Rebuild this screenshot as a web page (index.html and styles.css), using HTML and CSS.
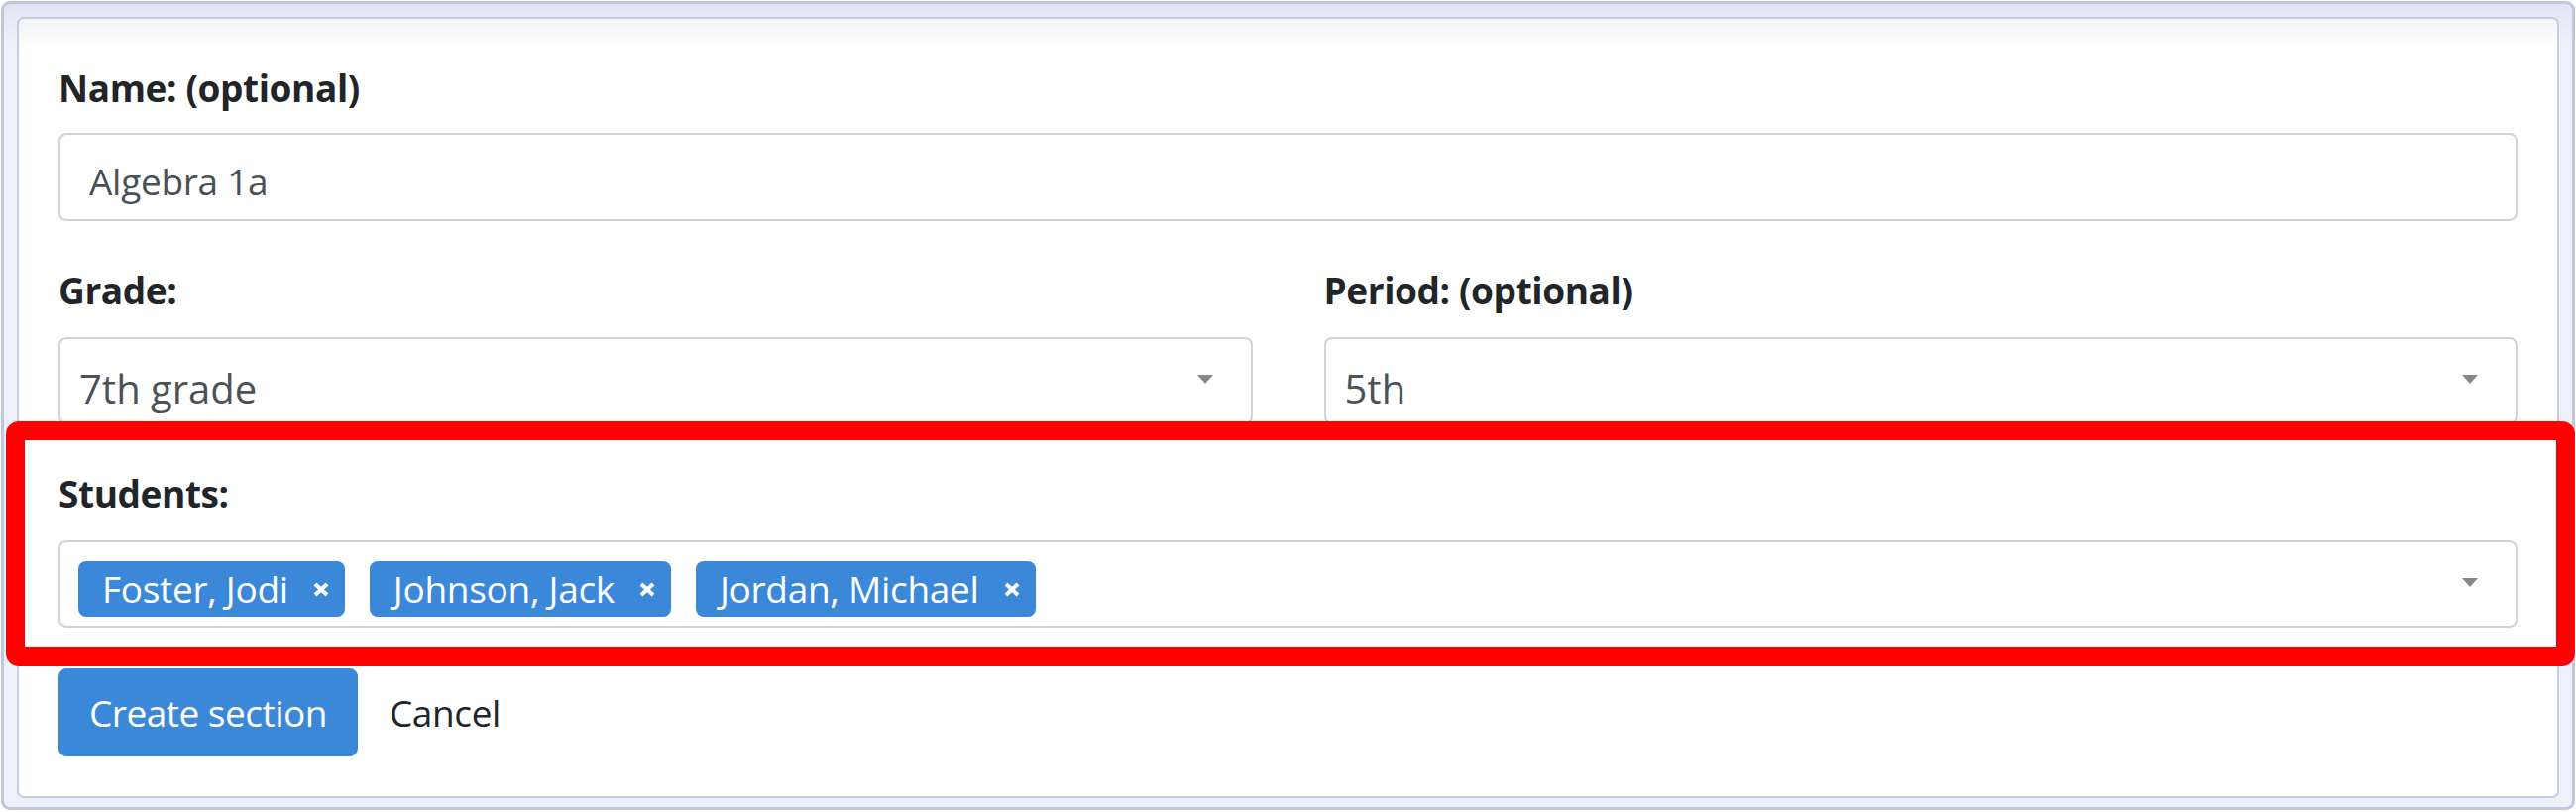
FILE: index.html
```html
<!DOCTYPE html>
<html lang="en">
<head>
<meta charset="utf-8">
<title>Create section</title>
<link rel="stylesheet" href="styles.css">
</head>
<body>
<div class="frame">
  <div class="panel">
    <form class="form">
      <div class="group group-name">
        <label class="label label-input" for="name">Name: (optional)</label>
        <input class="input" id="name" type="text" value="Algebra 1a" readonly>
      </div>
      <div class="row">
        <div class="col">
          <label class="label">Grade:</label>
          <div class="select">
            <span class="select-text">7th grade</span>
            <span class="arrow"></span>
          </div>
        </div>
        <div class="col">
          <label class="label">Period: (optional)</label>
          <div class="select">
            <span class="select-text">5th</span>
            <span class="arrow"></span>
          </div>
        </div>
      </div>
      <div class="group group-students">
        <label class="label">Students:</label>
        <div class="select multi">
          <ul class="chips">
            <li class="chip"><span class="chip-text">Foster, Jodi</span><svg class="chip-x" viewBox="0 0 16 15" width="16" height="15"><path d="M2 2 L14 13 M14 2 L2 13" stroke="#fff" stroke-width="4" stroke-linecap="butt" fill="none"/></svg></li>
            <li class="chip"><span class="chip-text">Johnson, Jack</span><svg class="chip-x" viewBox="0 0 16 15" width="16" height="15"><path d="M2 2 L14 13 M14 2 L2 13" stroke="#fff" stroke-width="4" stroke-linecap="butt" fill="none"/></svg></li>
            <li class="chip"><span class="chip-text">Jordan, Michael</span><svg class="chip-x" viewBox="0 0 16 15" width="16" height="15"><path d="M2 2 L14 13 M14 2 L2 13" stroke="#fff" stroke-width="4" stroke-linecap="butt" fill="none"/></svg></li>
          </ul>
          <span class="arrow"></span>
        </div>
      </div>
      <div class="actions">
        <button class="btn" type="button">Create section</button>
        <a class="cancel" href="#">Cancel</a>
      </div>
    </form>
  </div>
</div>
<div class="highlight"></div>
</body>
</html>
```
FILE: styles.css
```css
html, body {
  margin: 0;
  padding: 0;
  background: #ffffff;
  overflow: hidden;
}

body {
  font-family: "Open Sans", "Noto Sans", "Liberation Sans", sans-serif;
  color: #212529;
}

.frame {
  margin: 1px 1px 0 1px;
  width: 2597px;
  box-sizing: border-box;
  border: 3px solid #bfc7de;
  border-radius: 9px;
  background: linear-gradient(#dfe5f3, #edf1fa 40px);
  padding: 13px 13px 9px 13px;
}

.panel {
  border: 2px solid #c7cee2;
  border-radius: 7px;
  background: linear-gradient(#f3f4f7, #ffffff 32px);
  padding: 42px 40px 40px 40px;
}

.form {
  display: flex;
  flex-direction: column;
  margin: 0;
}

.group {
  display: flex;
  flex-direction: column;
}

.group-name {
  margin-bottom: 42px;
}

.group-students {
  margin-bottom: 41px;
}

.label {
  display: block;
  font-size: 37px;
  line-height: 56px;
  font-weight: 700;
  letter-spacing: -0.4px;
  color: #212529;
  margin-bottom: 19px;
}

.label-input {
  margin-bottom: 17px;
}

.input {
  display: block;
  box-sizing: border-box;
  width: 100%;
  height: 89px;
  margin: 0;
  border: 2px solid #ced4da;
  border-radius: 8px;
  padding: 8px 29px 0 29px;
  font-family: inherit;
  font-size: 37px;
  letter-spacing: -0.3px;
  line-height: 77px;
  color: #495057;
  background: #ffffff;
  outline: none;
}

.row {
  display: grid;
  grid-template-columns: 1fr 1fr;
  column-gap: 72px;
  margin-bottom: 42px;
}

.col {
  display: flex;
  flex-direction: column;
}

.select {
  box-sizing: border-box;
  height: 88px;
  border: 2px solid #ced4da;
  border-radius: 8px;
  background: #ffffff;
  display: flex;
  align-items: flex-start;
  padding: 23px 38px 0 19px;
}

.select-text {
  font-size: 40px;
  line-height: 54px;
  color: #4d5257;
  white-space: nowrap;
}

.arrow {
  margin-left: auto;
  margin-top: 13px;
  width: 0;
  height: 0;
  border-top: 9px solid #888888;
  border-left: 8.5px solid transparent;
  border-right: 8.5px solid transparent;
  flex: none;
}

.select.multi {
  padding: 19px 38px 0 18px;
}

.select.multi .arrow {
  margin-top: 17px;
}

.chips {
  list-style: none;
  margin: 0;
  padding: 0;
  display: flex;
  gap: 25px;
}

.chip {
  display: flex;
  align-items: center;
  height: 56px;
  box-sizing: border-box;
  padding: 0 16px 0 24px;
  border-radius: 8px;
  background: #3b88d9;
  color: #ffffff;
  font-size: 37px;
  letter-spacing: -0.3px;
  line-height: 56px;
  white-space: nowrap;
}

.chip-x {
  display: block;
  margin-left: 25px;
  flex: none;
}

.actions {
  display: flex;
  align-items: center;
}

.btn {
  box-sizing: border-box;
  height: 89px;
  margin: 0;
  padding: 0 30px;
  border: 1px solid #3b88d9;
  border-radius: 8px;
  background: #3b88d9;
  color: #ffffff;
  font-family: inherit;
  font-size: 37px;
  letter-spacing: -0.5px;
  line-height: 87px;
  cursor: pointer;
}

.cancel {
  padding-left: 32px;
  font-size: 37px;
  letter-spacing: -0.4px;
  line-height: 56px;
  color: #212529;
  text-decoration: none;
}

.highlight {
  position: absolute;
  left: 6px;
  top: 425px;
  width: 2592px;
  height: 247px;
  box-sizing: border-box;
  border: 19px solid #ff0000;
  border-radius: 13px;
  pointer-events: none;
}
```
